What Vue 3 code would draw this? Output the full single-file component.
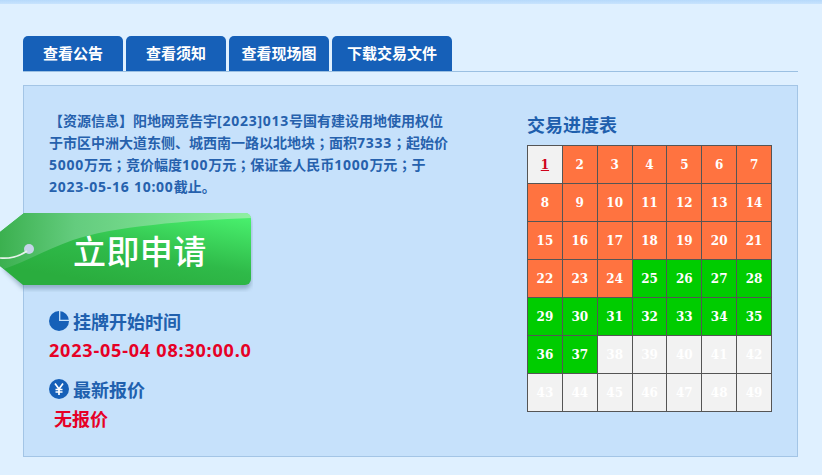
<script setup>
const tabs = ['查看公告', '查看须知', '查看现场图', '下载交易文件']
const cells = Array.from({ length: 49 }, (_, i) => {
  const n = i + 1
  return { n, cls: n === 1 ? 'first' : n <= 24 ? 'orange' : n <= 37 ? 'green' : 'idle' }
})
const infoLines = [
  '【资源信息】阳地网竞告宇[2023]013号国有建设用地使用权位',
  '于市区中洲大道东侧、城西南一路以北地块；面积7333；起始价',
  '5000万元；竞价幅度100万元；保证金人民币1000万元；于',
  '2023-05-16 10:00截止。'
].map((line) => line.split(/([\[\]0-9:\- ]+|；)/).filter(Boolean).map((text) => ({
  text,
  cls: text === '；' ? 'semi' : /^[\[\]0-9:\- ]+$/.test(text) ? 'num' : ''
})))
</script>

<template>
  <div class="page">
    <div class="topbar"></div>
    <div class="wrap">
      <nav class="tabs">
        <a v-for="(t, i) in tabs" :key="t" class="tab" :class="{ wide: i === 3 }">{{ t }}</a>
      </nav>
      <section class="panel">
        <div class="left">
          <div class="info">
            <div v-for="(line, l) in infoLines" :key="l" class="info-line"><span v-for="(p, i) in line" :key="i" :class="p.cls">{{ p.text }}</span></div>
          </div>
          <div class="tag">
            <svg class="tag-bg" width="253" height="80" viewBox="0 0 253 80">
              <defs>
                <linearGradient id="tg" x1="0.45" y1="1" x2="1" y2="0.1">
                  <stop offset="0" stop-color="#2aad3e"/>
                  <stop offset="0.4" stop-color="#2fba49"/>
                  <stop offset="1" stop-color="#48ee6c"/>
                </linearGradient>
                <linearGradient id="tl" x1="0" y1="0" x2="1" y2="0">
                  <stop offset="0" stop-color="#3bb04f"/>
                  <stop offset="0.3" stop-color="#64cc7e"/>
                  <stop offset="1" stop-color="#8ff0a2"/>
                </linearGradient>
                <filter id="ts" x="-5%" y="-5%" width="110%" height="125%">
                  <feGaussianBlur stdDeviation="2"/>
                </filter>
              </defs>
              <path d="M24 5H245a6 6 0 0 1 6 6v60a6 6 0 0 1-6 6H23L4 58V24Z" fill="#5f7f98" opacity=".5" filter="url(#ts)"/>
              <path d="M24 1H245a6 6 0 0 1 6 6v60a6 6 0 0 1-6 6H23L0 54V20Z" fill="url(#tg)"/>
              <path d="M24 1H245a6 6 0 0 1 6 5C190 8 110 15 73 28 45 38 25 50 4 57L0 54V20Z" fill="url(#tl)"/>
              <circle cx="29" cy="37" r="5" fill="#c6d4ea"/>
              <path d="M0 46C12 47 20 44 27 39" fill="none" stroke="#e6f3ea" stroke-width="1.6"/>
            </svg>
            <span class="tag-text">立即申请</span>
          </div>
          <h3 class="label first-label">
            <svg width="20" height="20" viewBox="0 0 20 20"><circle cx="10" cy="10" r="10" fill="#1660b8"/><path d="M10.700 0v9.300H20" fill="none" stroke="#c6e1fb" stroke-width="1.300"/></svg>
            挂牌开始时间
          </h3>
          <div class="value">2023-05-04 08:30:00.0</div>
          <h3 class="label">
            <svg width="20" height="20" viewBox="0 0 20 20"><circle cx="10" cy="10" r="10" fill="#1660b8"/><path d="M6 4.500 10 10l4-5.500M10 10v6M6.500 10.500h7M6.500 13h7" fill="none" stroke="#fff" stroke-width="1.700"/></svg>
            最新报价
          </h3>
          <div class="value none">无报价</div>
        </div>
        <div class="right">
          <h3 class="title">交易进度表</h3>
          <div class="grid">
            <div v-for="c in cells" :key="c.n" class="cell" :class="c.cls">{{ c.n }}</div>
          </div>
        </div>
      </section>
    </div>
  </div>
</template>

<style>
html, body { margin: 0; background: #dff0ff; }
</style>

<style scoped>
.page {
  width: 822px;
  height: 475px;
  overflow: hidden;
  background: #dff0ff;
  font-family: "Noto Sans", "Noto Sans CJK SC", sans-serif;
}
.topbar {
  height: 4px;
  background: linear-gradient(#b6d9fb, #c8e3fd);
}
.wrap {
  padding: 32px 24px 0 23px;
}
.tabs {
  display: flex;
  gap: 3px;
  height: 35px;
  border-bottom: 1px solid #9bc0e2;
}
.tab {
  width: 100px;
  height: 35px;
  line-height: 34px;
  text-align: center;
  background: #1660b8;
  color: #fff;
  font-size: 15px;
  font-weight: 700;
  border-radius: 5px 5px 0 0;
}
.tab.wide { width: 120px; }
.panel {
  box-sizing: border-box;
  margin-top: 13px;
  height: 372px;
  background: #c6e1fb;
  border: 1px solid #a3c5e6;
  display: flex;
}
.left {
  width: 503px;
  flex: none;
  padding-top: 24px;
  position: relative;
}
.info {
  margin: 0 0 0 25px;
  width: 410px;
  font-size: 14px;
  font-weight: 700;
  color: #2661ad;
}
.info-line {
  height: 22px;
  line-height: 22px;
  white-space: nowrap;
}
.num { letter-spacing: .75px; }
.semi { font-family: "Noto Sans CJK TC", sans-serif; line-height: 0; }
.tag {
  position: relative;
  margin: 14px 0 0 -24px;
  width: 253px;
  height: 80px;
}
.tag-bg { position: absolute; left: 0; top: 0; }
.tag-text {
  position: absolute;
  left: 73px;
  top: 18px;
  font-size: 33px;
  line-height: 44px;
  color: #fff;
  font-weight: 500;
  letter-spacing: .4px;
}
.label {
  margin: 0 0 0 25px;
  display: flex;
  align-items: center;
  gap: 4px;
  height: 26px;
  font-size: 18px;
  font-weight: 700;
  color: #2060ae;
}
.first-label { margin-top: 16px; }
.value {
  margin: 3px 0 13px 25px;
  font-size: 18px;
  line-height: 26px;
  font-weight: 700;
  letter-spacing: .8px;
  color: #e60026;
}
.value.none { margin-left: 30px; margin-top: 4px; letter-spacing: 0; }
.right {
  padding-top: 26px;
}
.title {
  margin: 0 0 7px;
  font-size: 18px;
  line-height: 26px;
  font-weight: 700;
  color: #1f5fad;
}
.grid {
  display: grid;
  grid-template-columns: repeat(7, 1fr);
  width: 245px;
  box-sizing: border-box;
  border-top: 1px solid #555;
  border-left: 1px solid #555;
}
.cell {
  box-sizing: border-box;
  height: 38px;
  display: flex;
  align-items: center;
  justify-content: center;
  border-right: 1px solid #555;
  border-bottom: 1px solid #555;
  font-family: "DejaVu Serif", serif;
  font-size: 12px;
  font-weight: 700;
  color: #fff;
}
.orange { background: #ff7340; }
.green { background: #00cc00; }
.idle { background: #f2f2f2; }
.first { background: #f2f2f2; color: #d0021b; text-decoration: underline; }
</style>
